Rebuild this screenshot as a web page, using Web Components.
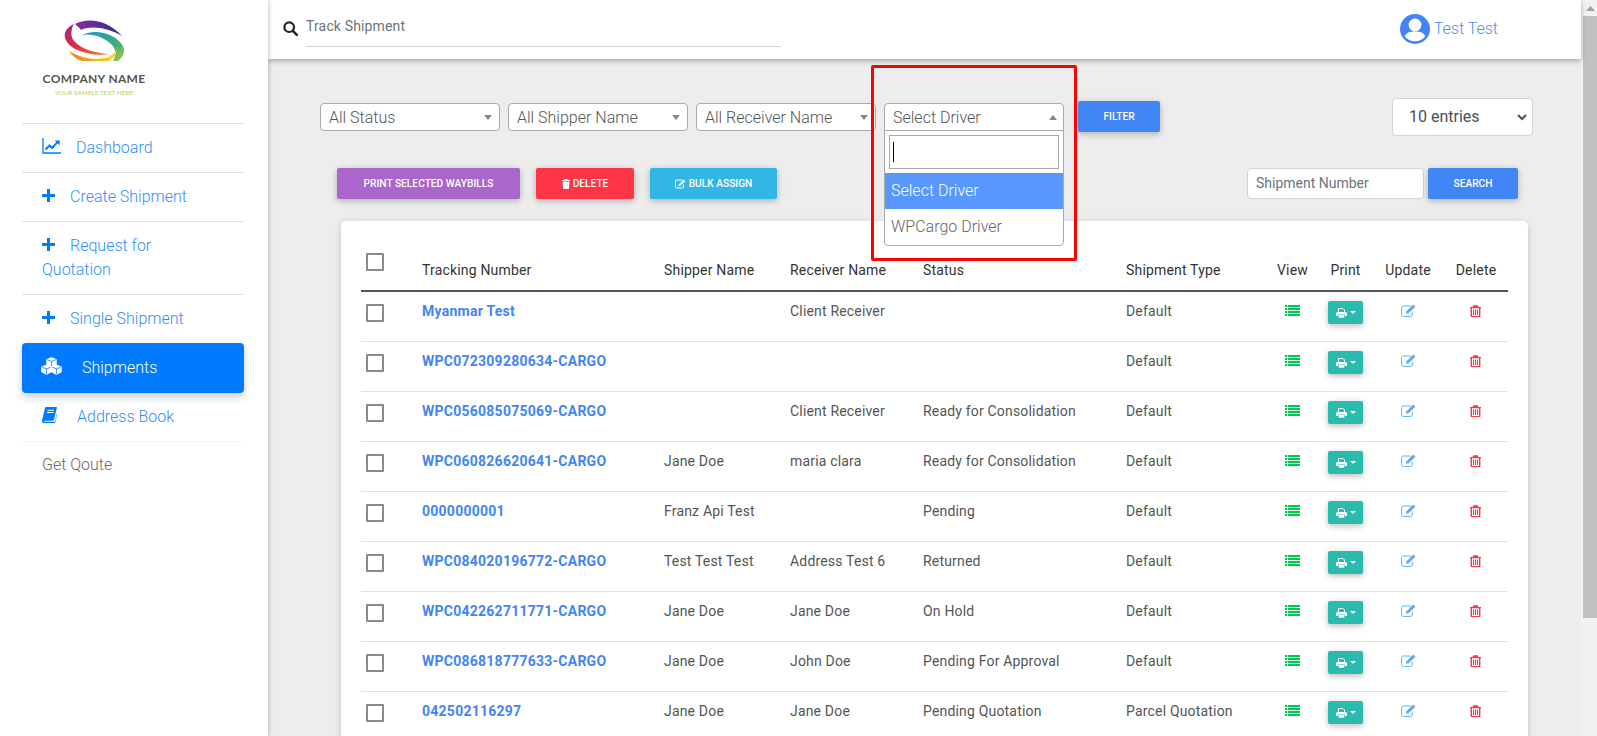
<!DOCTYPE html>
<html lang="en"><head><meta charset="utf-8"><title>Shipments</title>
<style>
html,body{margin:0;padding:0;height:736px;overflow:hidden;background:#ededed;font-family:Roboto,"Liberation Sans",sans-serif;}
</style></head><body>
<app-shell>
  <side-nav slot="side"></side-nav>
  <top-bar slot="top"></top-bar>
  <filter-bar slot="main"></filter-bar>
  <action-bar slot="main"></action-bar>
  <ship-table slot="main"></ship-table>
  <red-callout slot="main"></red-callout>
</app-shell>
<script>
const def=(name,css,html)=>{
  customElements.define(name,class extends HTMLElement{
    constructor(){super();const r=this.attachShadow({mode:'open'});
      r.innerHTML='<style>'+css+'</style>'+(typeof html==='function'?html(this):html);}
  });
};
const ICON={
 chart:'<svg width="19" height="16" viewBox="0 0 19 16"><path d="M1 0v15h18" fill="none" stroke="currentColor" stroke-width="1.3"/><path d="M3.5 11.5l4-4 2.5 2.5 5.2-5.6" fill="none" stroke="currentColor" stroke-width="2"/><path d="M12.6 2.6h5v5z" fill="currentColor"/></svg>',
 plus:'<svg width="13" height="13" viewBox="0 0 13 13"><path d="M5 0h3v5h5v3H8v5H5V8H0V5h5z" fill="currentColor"/></svg>',
 cubes:'<svg width="21" height="18" viewBox="0 0 21 18"><g fill="#fff" stroke="#fff" stroke-width=".8" stroke-linejoin="round"><path d="M10.500 .5l4.800 2v5l-4.800 2-4.800-2v-5z"/><path d="M5.500 8l4.800 1.800v5.200l-4.800 2.400L.7 15V9.800z"/><path d="M15.500 8l4.800 1.800v5.200l-4.800 2.400-4.800-2.400V9.800z"/></g><g fill="none" stroke="#007bff" stroke-width=".8"><path d="M6.300 2.700l4.200 1.700 4.200-1.700M10.500 4.400V8.800M1.300 10.200l4.200 1.700 4.200-1.700M5.500 11.900v5M11.300 10.200l4.200 1.700 4.200-1.700M15.500 11.900v5"/></g></svg>',
 book:'<svg width="15" height="16" viewBox="0 0 15 16"><path d="M4 0h10.300c.5 0 .7.4.6.9L12 12.600c-.2.8-.7 1.200-1.500 1.200H2.600c-.7 0-1 .9-.2 1h9.800c.4 0 .7-.3.8-.7l2.400-10 .1 1.200-2.400 10.200c-.2.500-.6.700-1.100.7H2C.6 16-.3 14.700.1 13.300L3 1C3.200.4 3.500 0 4 0z" fill="currentColor"/><path d="M5.500 3.300h6.500M5 5.500h6.500" stroke="#fff" stroke-width="1"/></svg>',
 search:'<svg width="15" height="15" viewBox="0 0 15 15"><circle cx="6.200" cy="6.200" r="4.800" fill="none" stroke="#212529" stroke-width="2.200"/><path d="M9.800 9.800l4 4" stroke="#212529" stroke-width="2.600" stroke-linecap="round"/></svg>',
 user:'<svg width="30" height="30" viewBox="0 0 30 30"><circle cx="15" cy="15" r="15" fill="#4285f4"/><circle cx="15" cy="11" r="6.400" fill="#fff"/><path d="M4.800 22.600C6 18.800 9.500 17.500 15 17.500s9 1.300 10.200 5.100C22.800 25.600 19.300 27.300 15 27.300S7.200 25.600 4.800 22.600z" fill="#fff"/></svg>',
 trashw:'<svg width="8" height="10" viewBox="0 0 8 10" style="vertical-align:-1px"><path d="M2.700 0h2.600l.5 1H8v1H0V1h2.200zM.6 2.600h6.800l-.4 7c0 .2-.2.400-.4.400H1.400c-.2 0-.4-.2-.4-.4z" fill="#fff"/></svg>',
 editw:'<svg width="11" height="10" viewBox="0 0 11 10" style="vertical-align:-1px"><path d="M7.500 1H1.600C1 1 .5 1.500.5 2v6c0 .6.500 1 1.100 1h6c.6 0 1-.4 1-1V5.500" fill="none" stroke="#fff" stroke-width="1"/><path d="M3.500 7.200l.5-2L8.700.5l1.700 1.700L5.600 6.800z" fill="#fff"/></svg>',
 list:'<svg width="15" height="11" viewBox="0 0 15 11" fill="#00c851"><path d="M0 0h2.300v2H0zM3 0h12v2H3zM0 3h2.300v2H0zM3 3h12v2H3zM0 6h2.300v2H0zM3 6h12v2H3zM0 9h2.300v2H0zM3 9h12v2H3z"/></svg>',
 print:'<svg width="11" height="10" viewBox="0 0 11 10"><path d="M2.500.5h4.500l1.500 1.500v2.500h-6z" fill="none" stroke="#fff" stroke-width="1"/><path d="M1 4.300h9c.5 0 1 .4 1 1v2.700H8.800V6.500H2.200V8H0V5.300c0-.6.500-1 1-1z" fill="#fff"/><path d="M2.700 7h5.600v2.700H2.700z" fill="#fff"/></svg>',
 edit:'<svg width="15" height="13" viewBox="0 0 15 13" style="margin-top:-1px"><path d="M9.800 2H2.200C1.300 2 .6 2.700.6 3.600v7.300c0 .9.700 1.500 1.600 1.500h7.600c.9 0 1.500-.6 1.500-1.500V7.500" fill="none" stroke="#5cb8ea" stroke-width="1"/><path d="M4.800 9.800l.7-2.600L12.200.5l2.200 2.200L7.500 9.200z" fill="#6aa5e6"/></svg>',
 trash:'<svg width="11" height="12" viewBox="0 0 11 12" style="margin-right:2px"><path d="M3.400.3h4.200l.9 1.700H11v1.200H0V2h2.500z" fill="#ff3547"/><path d="M1.300 3v8c0 .4.300.6.600.6h7.200c.3 0 .6-.2.600-.6V3" fill="none" stroke="#ff3547" stroke-width="1.400"/><path d="M3.500 4.500v5.500M5.500 4.500v5.500M7.500 4.500v5.500" stroke="#ff3547" stroke-width="1.100"/></svg>'
};

def('app-shell',`:host{display:flex;width:1597px;height:736px;overflow:hidden;background:#ededed}
.col{flex:1;min-width:0;display:flex;flex-direction:column;position:relative;background:#ededed}
.main{position:relative;flex:1;min-height:0}
.sb{flex:none;width:16px;background:#f1f1f1;display:flex;flex-direction:column;align-items:flex-end}
.ar{width:14px;height:16px;display:flex;align-items:center;justify-content:center}
.th{width:14px;height:602px;background:#c1c1c1}`,
`<slot name="side"></slot><div class="col"><slot name="top"></slot><div class="main"><slot name="main"></slot></div></div>
<div class="sb"><div class="ar"><svg width="9" height="5" viewBox="0 0 9 5"><path d="M4.500 0L9 5H0z" fill="#a0a0a0"/></svg></div><div class="th"></div></div>`);

def('side-nav',`:host{display:block;flex:none;width:268px;height:736px;background:#fff;box-shadow:0 0 5px rgba(0,0,0,.3);position:relative;z-index:3;box-sizing:border-box;font:300 16px/24px Roboto,sans-serif}
.logo{height:123px;display:flex;flex-direction:column;align-items:center;width:188px;box-sizing:border-box;padding-top:17px}
.nm{font:700 12px/12px Lato,sans-serif;color:#555;margin-top:12px;white-space:nowrap;letter-spacing:.3px}
.sl{font:400 6.400px/9px Lato,sans-serif;color:#b9d05c;margin-top:3px;white-space:nowrap}
ul{list-style:none;margin:0 24px 0 22px;padding:0}
li{border-top:1px solid #dee2e6;padding:12px 40px 12px 20px;color:#2f8eff}
li.active{border:0;background:#007bff;color:#fff;border-radius:4px;height:50px;box-sizing:border-box;padding:13px 19px;box-shadow:0 4px 8px rgba(0,0,0,.2)}
li.noline{border-top:0}
li.plain{color:#6a6a6a;border-top:1px solid #f5f5f5;padding-top:11px}
.i{display:inline-block;color:#007bff;vertical-align:0}
.i svg{display:block}`,
`<div class="logo">
<svg width="62" height="44" viewBox="33 4 62 44">
<defs>
<linearGradient id="g1" x1="0" x2="1"><stop offset="0" stop-color="#8a2aa0"/><stop offset="1" stop-color="#24348f"/></linearGradient>
<linearGradient id="g2" x1="0" y1="0" x2="1" y2="1"><stop offset="0" stop-color="#a3218f"/><stop offset=".5" stop-color="#e52d3a"/><stop offset="1" stop-color="#f5841f"/></linearGradient>
<linearGradient id="g3" x1="0" x2="1" y1="0" y2="1"><stop offset="0" stop-color="#1f8fd0"/><stop offset=".6" stop-color="#3fae7c"/><stop offset="1" stop-color="#c5cf3a"/></linearGradient>
<linearGradient id="g4" x1="0" x2="1"><stop offset="0" stop-color="#f47a20"/><stop offset="1" stop-color="#f8e023"/></linearGradient>
</defs>
<path fill="url(#g1)" d="M45 11C58 4 78 7 92 23C78 15 62 12 51 17C50 15 47 13 45 11Z"/>
<path fill="url(#g2)" d="M44 11C33 16 30 27 45 36C56 41 68 43 79 41C66 40 52 37 44 28C40 23 41 16 44 11Z"/>
<path fill="url(#g3)" d="M52 22C66 15 86 21 93 33C97 41 90 49 80 52C85 46 88 39 82 32C74 24 62 20 52 22Z"/>
<path fill="url(#g4)" d="M39 38C50 45 65 48 79 44C82 42 85 39 87 37C86 43 82 48 72 50C58 52 44 47 39 38Z"/>
</svg>
<div class="nm">COMPANY NAME</div><div class="sl">YOUR SAMPLE TEXT HERE</div></div>
<ul>
<li><span class="i" style="margin-right:15px;vertical-align:-1px">${ICON.chart}</span>Dashboard</li>
<li><span class="i" style="margin-right:15px">${ICON.plus}</span>Create Shipment</li>
<li><span class="i" style="margin-right:15px">${ICON.plus}</span>Request for Quotation</li>
<li><span class="i" style="margin-right:15px">${ICON.plus}</span>Single Shipment</li>
<li class="active"><span class="i" style="margin-right:20px;vertical-align:-2px">${ICON.cubes}</span>Shipments</li>
<li class="noline" style="height:48px;box-sizing:border-box"><span class="i" style="margin-right:20px;vertical-align:-1px">${ICON.book}</span>Address Book</li>
<li class="plain">Get Qoute</li>
</ul>`);

def('top-bar',`:host{display:flex;height:59px;background:#fff;box-shadow:0 2px 5px rgba(0,0,0,.3);position:relative;z-index:2;align-items:flex-start;box-sizing:border-box;font-family:Roboto,sans-serif}
.s{margin:21px 0 0 15px;width:23px;flex:none}.s svg{display:block}
.f{width:475px;height:47px;border-bottom:1px solid #ced4da;font:400 14px/20px Roboto,sans-serif;color:#6c757d;padding-top:16px;box-sizing:border-box;letter-spacing:.15px}
.u{margin-left:auto;margin-right:83px;display:flex;align-items:center;margin-top:14px;gap:4px;color:#3f90ff;font:300 16px/28px Roboto,sans-serif}
.u svg{display:block}`,
`<div class="s">${ICON.search}</div><div class="f">Track Shipment</div><div class="u">${ICON.user}<span>Test Test</span></div>`);

def('filter-select',`:host{display:block;position:relative;width:180px;height:28px;flex:none;font:300 16px/28px Roboto,sans-serif;color:#555}
.b{box-sizing:border-box;height:28px;border:1px solid #aaa;border-radius:4px;background:#fff;padding-left:8px;position:relative;white-space:nowrap}
.a{position:absolute;right:7px;top:11px;border:4px solid transparent;border-top:5px solid #888;border-bottom:0}
:host([open]) .b{border-radius:4px 4px 0 0}
:host([open]) .a{right:6px;border-top:0;border-bottom:5px solid #888}
.d{display:none;position:absolute;left:0;top:27px;width:180px;box-sizing:border-box;height:116px;background:#fff;border:1px solid #aaa;border-radius:0 0 4px 4px;z-index:5;overflow:hidden}
:host([open]) .d{display:block}
.q{margin:4px 4px 0;height:34px;box-sizing:border-box;border:1px solid #aaa;padding:6px 0 0 3px}
.q i{display:block;width:1px;height:20px;background:#000}
.o{height:36px;line-height:36px;padding-left:6px}
.o.h{background:#5897fb;color:#fff;margin-top:4px}
.o.n{color:#666;line-height:36px}`,
el=>`<div class="b"><slot></slot><span class="a"></span></div>
${el.hasAttribute('open')?'<div class="d"><div class="q"><i></i></div><div class="o h">Select Driver</div><div class="o n">WPCargo Driver</div></div>':''}`);

def('md-btn',`:host{display:flex;align-items:center;justify-content:center;box-sizing:border-box;height:31px;padding-top:1px;flex:none;border-radius:2px;color:#fff;font:500 10.200px/1 Roboto,sans-serif;text-transform:uppercase;white-space:nowrap;box-shadow:0 2px 5px rgba(0,0,0,.16),0 2px 10px rgba(0,0,0,.12);background:var(--c,#4285f4);width:var(--w,auto);gap:3px}`,`<slot></slot>`);

def('filter-bar',`:host{display:flex;align-items:center;height:38px;margin-top:39px;padding-left:52px;padding-right:48px;gap:8px}
.e{margin-left:auto;box-sizing:border-box;width:141px;height:38px;background:#fff;border:1px solid #ced4da;border-radius:4px;font:400 16px/36px Roboto,"Liberation Sans",sans-serif;color:#495057;padding-left:16px;position:relative}
.e svg{position:absolute;right:5px;top:15px}
md-btn{margin:0 0 1px 6px}`,
`<filter-select>All Status</filter-select><filter-select>All Shipper Name</filter-select><filter-select>All Receiver Name</filter-select><filter-select open>Select Driver</filter-select>
<md-btn style="--w:82px">Filter</md-btn>
<div class="e">10 entries<svg width="10" height="7" viewBox="0 0 10 7"><path d="M1 1l4 4 4-4" fill="none" stroke="#495057" stroke-width="2"/></svg></div>`);

def('action-bar',`:host{display:flex;align-items:center;height:31px;margin-top:32px;padding-left:69px;padding-right:63px;gap:16px}
.sp{flex:1}
.i{box-sizing:border-box;width:177px;height:31px;background:#fff;border:1px solid #ced4da;border-radius:4px;font:400 14px/29px Roboto,sans-serif;color:#6c757d;padding-left:8px;margin-right:-12px}`,
`<md-btn style="--w:183px;--c:#aa66cc">Print Selected Waybills</md-btn>
<md-btn style="--w:98px;--c:#ff3547">${ICON.trashw}Delete</md-btn>
<md-btn style="--w:127px;--c:#33b5e5">${ICON.editw}Bulk Assign</md-btn>
<div class="sp"></div><div class="i">Shipment Number</div><md-btn style="--w:90px">Search</md-btn>`);

const COLS='61px 242px 126px 133px 203px 140px 53px 53px 72px 64px';
def('check-box',`:host{display:block;width:18px;height:18px;box-sizing:border-box;border:2px solid #8a8a8a;border-radius:1px;background:#fff}`,``);

def('ship-row',`:host{display:grid;grid-template-columns:${COLS};height:50px;box-sizing:border-box;border-bottom:1px solid #dee2e6;font:400 14px/21px Roboto,sans-serif;color:#555;padding:9px 0 0 0;letter-spacing:.18px}
.c{white-space:nowrap}
check-box{margin:3px 0 0 5px}
a{color:#4285f4;font-weight:700;text-decoration:none;letter-spacing:.25px}
.ic{display:flex;justify-content:center;padding-top:4px;height:13px}
.ic svg{display:block}
.p{display:flex;justify-content:center}
.pb{width:35px;height:23px;background:#2bbbad;border-radius:2px;display:flex;align-items:center;justify-content:center;gap:3px;box-shadow:0 2px 5px rgba(0,0,0,.16),0 2px 10px rgba(0,0,0,.12)}
.pb svg{display:block}
.car{border:3px solid transparent;border-top:3px solid #fff;border-bottom:0}`,
el=>{const g=n=>el.getAttribute(n)||'';return `<div><check-box></check-box></div><div class="c"><a>${g('no')}</a></div><div class="c">${g('sh')}</div><div class="c">${g('re')}</div><div class="c">${g('st')}</div><div class="c">${g('ty')}</div>
<div class="ic">${ICON.list}</div><div class="p"><div class="pb">${ICON.print}<span class="car"></span></div></div><div class="ic">${ICON.edit}</div><div class="ic">${ICON.trash}</div>`});

def('ship-table',`:host{display:block;box-sizing:border-box;margin:22px 0 0 73px;width:1187px;background:#fff;border-radius:5px;padding:0 20px;box-shadow:0 2px 5px rgba(0,0,0,.12),0 2px 10px rgba(0,0,0,.08);font:400 14px/21px Roboto,sans-serif;color:#333}
.h{display:grid;grid-template-columns:${COLS};height:71px;box-sizing:border-box;border-bottom:2px solid #555;align-items:end;padding-bottom:9px;letter-spacing:.18px}
.h div{white-space:nowrap}.h .m{text-align:center}
check-box{margin:0 0 10px 5px}`,
`<div class="h"><div><check-box></check-box></div><div>Tracking Number</div><div>Shipper Name</div><div>Receiver Name</div><div>Status</div><div>Shipment Type</div><div class="m">View</div><div class="m">Print</div><div class="m">Update</div><div class="m">Delete</div></div>
<ship-row no="Myanmar Test" re="Client Receiver" ty="Default"></ship-row>
<ship-row no="WPC072309280634-CARGO" ty="Default"></ship-row>
<ship-row no="WPC056085075069-CARGO" re="Client Receiver" st="Ready for Consolidation" ty="Default"></ship-row>
<ship-row no="WPC060826620641-CARGO" sh="Jane Doe" re="maria clara" st="Ready for Consolidation" ty="Default"></ship-row>
<ship-row no="0000000001" sh="Franz Api Test" st="Pending" ty="Default"></ship-row>
<ship-row no="WPC084020196772-CARGO" sh="Test Test Test" re="Address Test 6" st="Returned" ty="Default"></ship-row>
<ship-row no="WPC042262711771-CARGO" sh="Jane Doe" re="Jane Doe" st="On Hold" ty="Default"></ship-row>
<ship-row no="WPC086818777633-CARGO" sh="Jane Doe" re="John Doe" st="Pending For Approval" ty="Default"></ship-row>
<ship-row no="042502116297" sh="Jane Doe" re="Jane Doe" st="Pending Quotation" ty="Parcel Quotation"></ship-row>`);

def('red-callout',`:host{position:absolute;left:603px;top:6px;width:206px;height:196px;box-sizing:border-box;border:3px solid #f00;border-radius:2px;pointer-events:none;z-index:6}`,``);
</script>
</body></html>
